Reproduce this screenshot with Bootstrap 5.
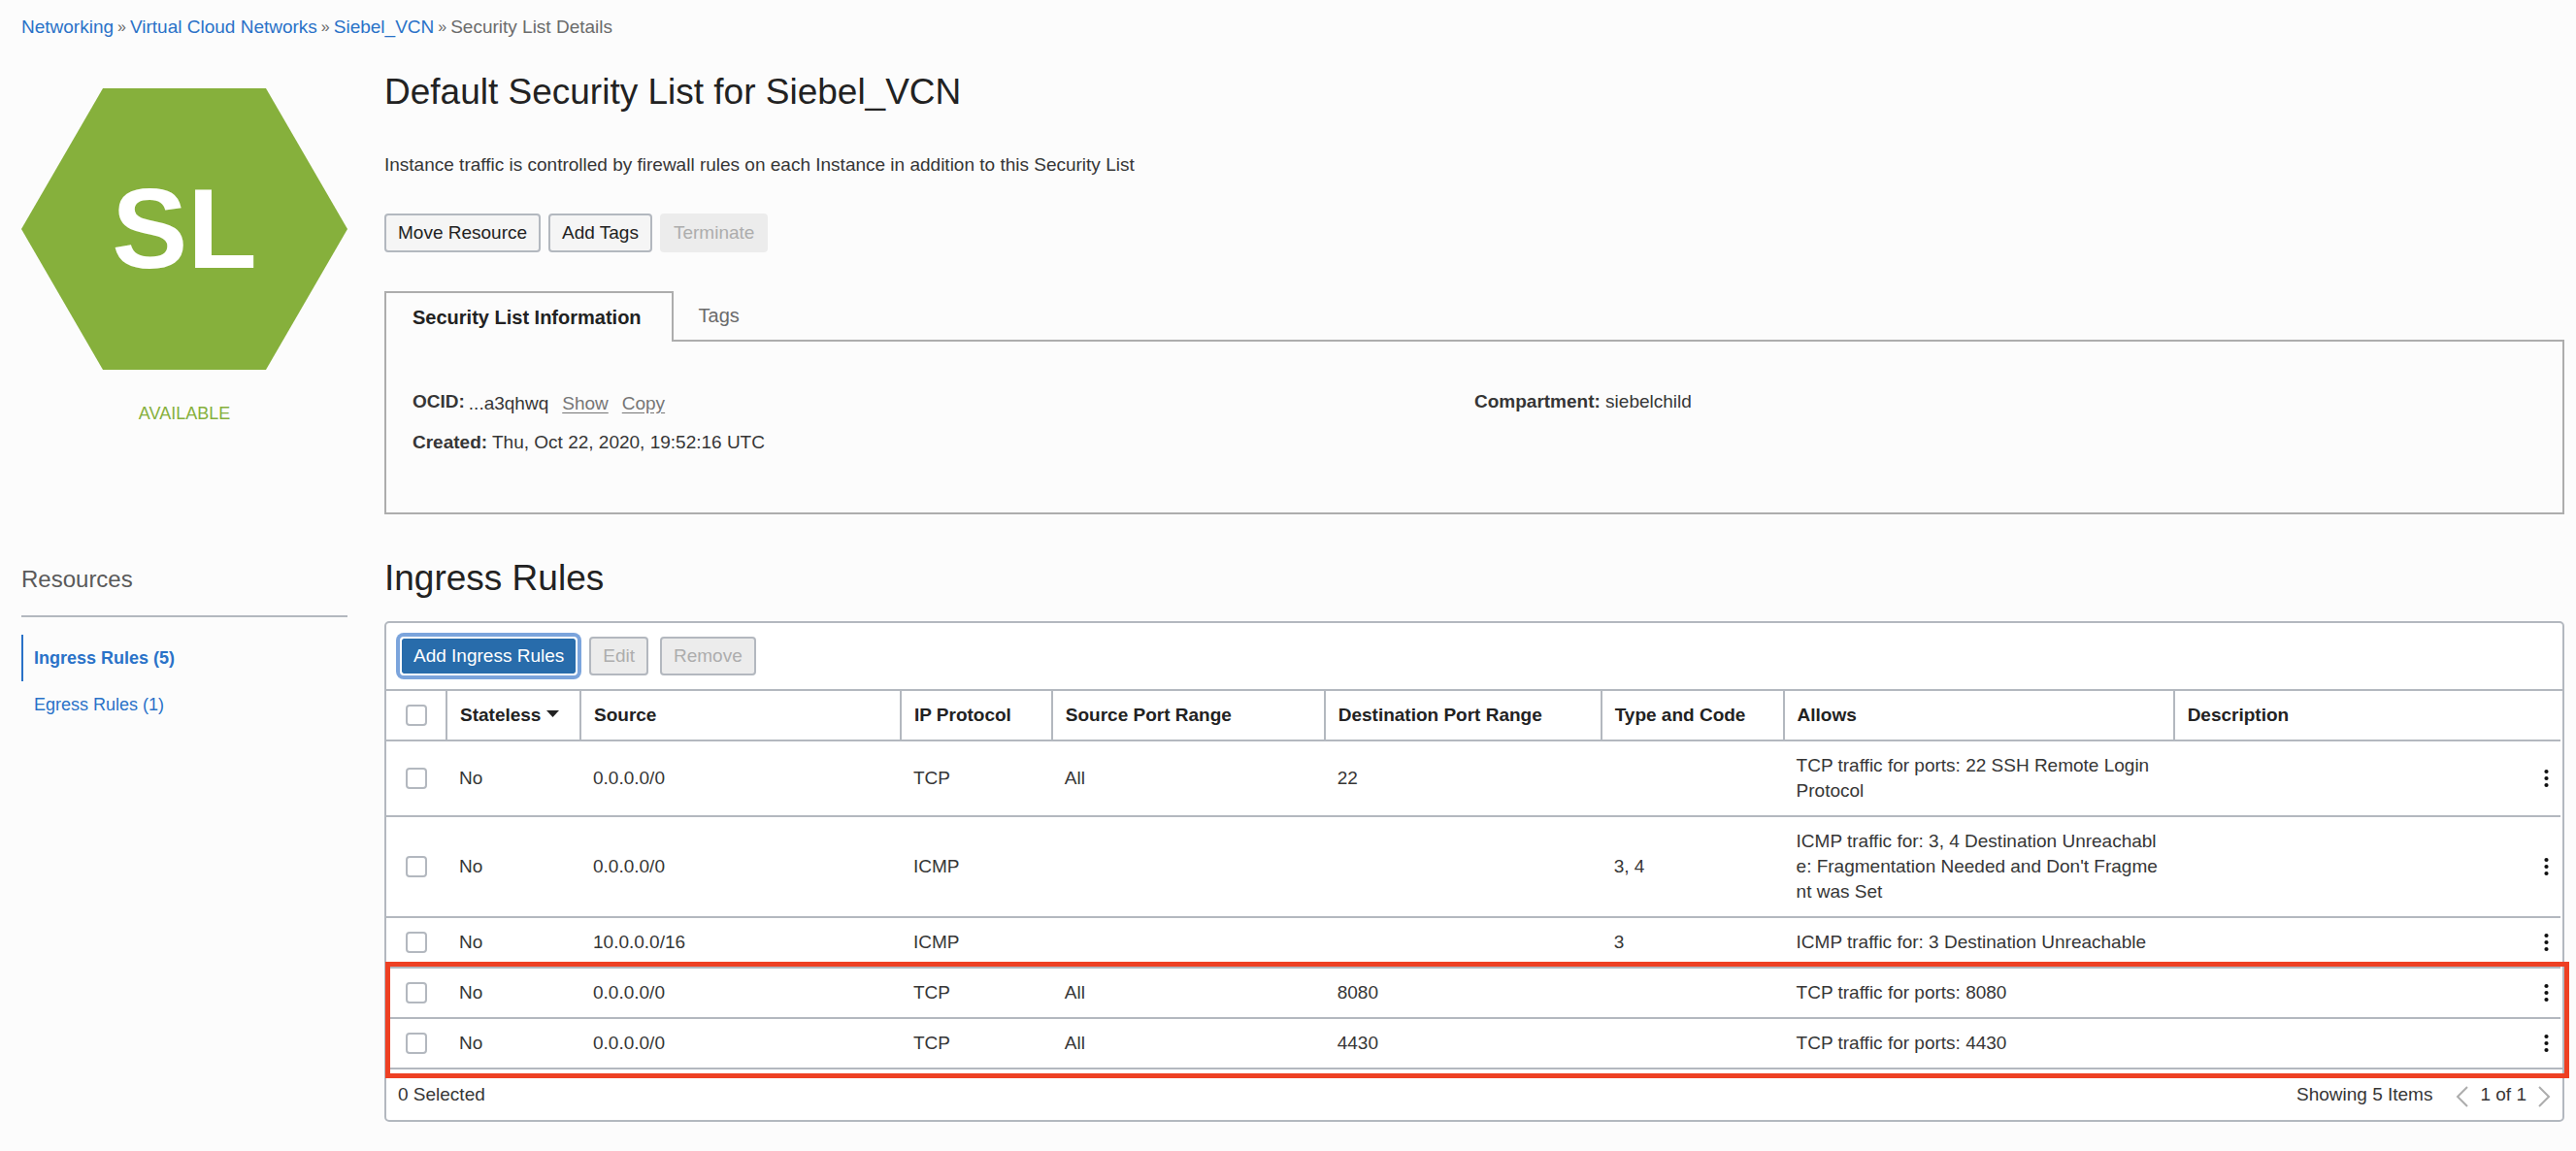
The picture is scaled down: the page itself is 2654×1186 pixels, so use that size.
<!DOCTYPE html>
<html lang="en">
<head>
<meta charset="utf-8">
<meta name="viewport" content="width=device-width, initial-scale=1">
<title>Default Security List for Siebel_VCN</title>
<link href="https://cdn.jsdelivr.net/npm/bootstrap@5.3.0/dist/css/bootstrap.min.css" rel="stylesheet">
<style>
  :root { --line: #b3b8bf; --panel: #adadad; --link: #2a72c8; --ink: #222; --text: #363636; --muted: #6b6b6b; --side: 336px; }
  body { background: #fcfcfc; color: var(--text); font: 19px/26px "Liberation Sans", Arial, sans-serif; }
  a { color: var(--link); text-decoration: none; }
  .page { padding: 15px 12px 24px 22px; }
  .crumbs { --bs-breadcrumb-divider: "»"; --bs-breadcrumb-item-padding-x: 4px; --bs-breadcrumb-divider-color: var(--muted); --bs-breadcrumb-item-active-color: var(--muted); --bs-breadcrumb-margin-bottom: 32px; --bs-breadcrumb-font-size: 19px; }
  .crumbs .breadcrumb-item + .breadcrumb-item::before { font-size: 16px; }
  .split { display: grid; grid-template-columns: var(--side) minmax(0, 1fr); column-gap: 38px; }
  .title { font-size: 37px; line-height: 44px; font-weight: 400; color: var(--ink); margin: 0; }
  .hexagon { height: 290px; margin-top: 18px; background: #86b03c; color: #fff; font-size: 117px; font-weight: 700; clip-path: polygon(25% 0, 75% 0, 100% 50%, 75% 100%, 25% 100%, 0 50%); }
  .state { color: #86b03c; margin-top: 32px; font-size: 18px; }
  .intro { margin: 40px 0 37px; }
  .btn { --bs-btn-font-size: 19px; --bs-btn-line-height: 26px; --bs-btn-padding-x: 12px; --bs-btn-padding-y: 5px; --bs-btn-border-width: 2px; --bs-btn-border-radius: 4px; --bs-btn-disabled-opacity: 1; line-height: 26px; }
  .btn-plain { --bs-btn-color: var(--ink); --bs-btn-bg: #f5f5f5; --bs-btn-border-color: var(--line); --bs-btn-disabled-color: #adadad; --bs-btn-disabled-bg: #ececec; --bs-btn-disabled-border-color: var(--line); }
  .btn-flat { --bs-btn-disabled-border-color: #ececec; }
  .btn-add { --bs-btn-color: #fff; --bs-btn-bg: #286cab; --bs-btn-border-color: #fff; margin-right: 12px; background-clip: padding-box; box-shadow: 0 0 0 4px #7ba4dc; }
  .info-tabs { margin-top: 40px; margin-bottom: -2px; }
  .info-tabs .nav-link { font-size: 20px; line-height: 26px; padding: 10px 24px 14px; border: 2px solid transparent; border-bottom: 0; border-radius: 0; color: var(--muted); }
  .info-tabs .nav-link.active { padding: 12px 31px 12px 27px; background: #fcfcfc; border-color: var(--panel); color: var(--ink); font-weight: 700; position: relative; }
  .info { border: 2px solid var(--panel); padding: 49px 27px 59px; }
  .ocid-value { padding-top: 3px; line-height: 23px; gap: 14px; margin-left: 4px; }
  .act { color: #767676; text-decoration: underline; text-underline-offset: 3px; }
  .rules { margin-top: 44px; }
  .side-title { font-size: 24px; line-height: 36px; font-weight: 400; color: #5a5a5a; margin: 0 0 18px; padding: 5px 0 19px; border-bottom: 2px solid var(--line); }
  .side-nav .nav-link { padding: 11px; border-left: 2px solid transparent; color: var(--link); font-size: 18px; }
  .side-nav .nav-link.active { font-weight: 700; border-color: var(--link); }
  .grid-box { border: 2px solid var(--line); border-radius: 5px; background: #fff; margin-top: 22px; }
  .tools { padding: 14px; border-bottom: 2px solid var(--line); }
  .rule-table { --bs-table-bg: transparent; table-layout: fixed; width: calc(100% - 2px); margin: 0; color: var(--text); vertical-align: middle; }
  .rule-table > thead { vertical-align: middle; }
  .rule-table > :not(caption) > * > * { padding: 12px; border: 0 solid var(--line); border-bottom-width: 2px; color: inherit; }
  .rule-table > thead > tr > th { color: var(--ink); }
  .rule-table > thead > tr > th + th { border-left-width: 2px; padding-left: 13px; padding-right: 0; }
  .rule-table > tbody > tr > td + td { padding-left: 13px; }
  .rule-table > tbody > tr > td + td:last-child { padding: 0 12px 0 0; }
  .rule-table > tbody > tr:last-child > td { border-bottom-width: 0; }
  .rule-table .form-check-input { display: block; width: 22px; height: 22px; margin: 0 auto; border: 2px solid var(--line); border-radius: 4px; }
  .c-check { width: 62px; } .c-state { width: 138px; } .c-source { width: 14.73%; } .c-proto { width: 6.96%; }
  .c-sport { width: 12.54%; } .c-dport { width: 12.72%; } .c-type { width: 8.39%; } .c-allow { width: 17.95%; }
  .more, .pager { border: 0; background: none; padding: 0; display: flex; }
  .more { margin-left: auto; }
  .foot { border-top: 2px solid var(--line); padding: 13px 12px; }
  .mark-box { position: absolute; left: -1px; right: -7px; bottom: 43px; height: 120px; border: 5px solid #ee4023; pointer-events: none; }
</style>
<script src="https://cdn.jsdelivr.net/npm/bootstrap@5.3.0/dist/js/bootstrap.bundle.min.js"></script>
</head>
<body>
<div class="page">
  <nav aria-label="breadcrumb">
    <ol class="breadcrumb crumbs">
      <li class="breadcrumb-item"><a href="#">Networking</a></li>
      <li class="breadcrumb-item"><a href="#">Virtual Cloud Networks</a></li>
      <li class="breadcrumb-item"><a href="#">Siebel_VCN</a></li>
      <li class="breadcrumb-item active" aria-current="page">Security List Details</li>
    </ol>
  </nav>

  <section class="split">
    <div class="text-center">
      <div class="hexagon d-flex align-items-center justify-content-center">SL</div>
      <div class="state">AVAILABLE</div>
    </div>
    <main>
      <h1 class="title">Default Security List for Siebel_VCN</h1>
      <p class="intro">Instance traffic is controlled by firewall rules on each Instance in addition to this Security List</p>
      <div class="d-flex gap-2">
        <button type="button" class="btn btn-plain">Move Resource</button>
        <button type="button" class="btn btn-plain">Add Tags</button>
        <button type="button" class="btn btn-plain btn-flat" disabled>Terminate</button>
      </div>
      <ul class="nav info-tabs">
        <li class="nav-item"><a class="nav-link active" href="#info">Security List Information</a></li>
        <li class="nav-item"><a class="nav-link" href="#tags">Tags</a></li>
      </ul>
      <div class="info" id="info">
        <div class="row g-0">
          <div class="col-6">
            <div class="d-flex mb-3"><strong>OCID:</strong>
              <span class="ocid-value d-flex"><span>...a3qhwq</span><a class="act" href="#">Show</a><a class="act" href="#">Copy</a></span></div>
            <div><strong>Created:</strong> Thu, Oct 22, 2020, 19:52:16 UTC</div>
          </div>
          <div class="col-6"><strong>Compartment:</strong> siebelchild</div>
        </div>
      </div>
    </main>
  </section>

  <section class="split rules">
    <aside>
      <h2 class="side-title">Resources</h2>
      <nav class="nav flex-column side-nav">
        <a class="nav-link active" href="#">Ingress Rules (5)</a>
        <a class="nav-link" href="#">Egress Rules (1)</a>
      </nav>
    </aside>
    <div>
      <h2 class="title">Ingress Rules</h2>
      <div class="grid-box position-relative">
        <div class="tools d-flex">
          <button type="button" class="btn btn-add">Add Ingress Rules</button>
          <button type="button" class="btn btn-plain me-2" disabled>Edit</button>
          <button type="button" class="btn btn-plain ms-1" disabled>Remove</button>
        </div>
        <table class="table rule-table">
          <colgroup><col class="c-check"><col class="c-state"><col class="c-source"><col class="c-proto"><col class="c-sport"><col class="c-dport"><col class="c-type"><col class="c-allow"><col></colgroup>
          <thead>
            <tr>
              <th scope="col"><input class="form-check-input" type="checkbox" aria-label="Select all rules"></th>
              <th scope="col" class="text-nowrap">Stateless <svg width="13" height="16" viewBox="0 0 13 16" aria-hidden="true"><path d="M0 2h13L6.500 9z" fill="#222"/></svg></th>
              <th scope="col">Source</th>
              <th scope="col">IP Protocol</th>
              <th scope="col">Source Port Range</th>
              <th scope="col">Destination Port Range</th>
              <th scope="col">Type and Code</th>
              <th scope="col">Allows</th>
              <th scope="col">Description</th>
            </tr>
          </thead>
          <tbody>
            <tr>
              <td><input class="form-check-input" type="checkbox" aria-label="Select rule 1"></td>
              <td>No</td><td>0.0.0.0/0</td><td>TCP</td><td>All</td><td>22</td><td></td>
              <td>TCP traffic for ports: 22 SSH Remote Login<br>Protocol</td>
              <td><button type="button" class="more" aria-label="Actions"><svg width="5" height="20" viewBox="0 0 5 20" fill="#111"><circle cx="2.5" cy="3" r="2.1"/><circle cx="2.5" cy="10" r="2.1"/><circle cx="2.5" cy="17" r="2.1"/></svg></button></td>
            </tr>
            <tr>
              <td><input class="form-check-input" type="checkbox" aria-label="Select rule 2"></td>
              <td>No</td><td>0.0.0.0/0</td><td>ICMP</td><td></td><td></td><td>3, 4</td>
              <td>ICMP traffic for: 3, 4 Destination Unreachabl<br>e: Fragmentation Needed and Don't Fragme<br>nt was Set</td>
              <td><button type="button" class="more" aria-label="Actions"><svg width="5" height="20" viewBox="0 0 5 20" fill="#111"><circle cx="2.5" cy="3" r="2.1"/><circle cx="2.5" cy="10" r="2.1"/><circle cx="2.5" cy="17" r="2.1"/></svg></button></td>
            </tr>
            <tr>
              <td><input class="form-check-input" type="checkbox" aria-label="Select rule 3"></td>
              <td>No</td><td>10.0.0.0/16</td><td>ICMP</td><td></td><td></td><td>3</td>
              <td>ICMP traffic for: 3 Destination Unreachable</td>
              <td><button type="button" class="more" aria-label="Actions"><svg width="5" height="20" viewBox="0 0 5 20" fill="#111"><circle cx="2.5" cy="3" r="2.1"/><circle cx="2.5" cy="10" r="2.1"/><circle cx="2.5" cy="17" r="2.1"/></svg></button></td>
            </tr>
            <tr>
              <td><input class="form-check-input" type="checkbox" aria-label="Select rule 4"></td>
              <td>No</td><td>0.0.0.0/0</td><td>TCP</td><td>All</td><td>8080</td><td></td>
              <td>TCP traffic for ports: 8080</td>
              <td><button type="button" class="more" aria-label="Actions"><svg width="5" height="20" viewBox="0 0 5 20" fill="#111"><circle cx="2.5" cy="3" r="2.1"/><circle cx="2.5" cy="10" r="2.1"/><circle cx="2.5" cy="17" r="2.1"/></svg></button></td>
            </tr>
            <tr>
              <td><input class="form-check-input" type="checkbox" aria-label="Select rule 5"></td>
              <td>No</td><td>0.0.0.0/0</td><td>TCP</td><td>All</td><td>4430</td><td></td>
              <td>TCP traffic for ports: 4430</td>
              <td><button type="button" class="more" aria-label="Actions"><svg width="5" height="20" viewBox="0 0 5 20" fill="#111"><circle cx="2.5" cy="3" r="2.1"/><circle cx="2.5" cy="10" r="2.1"/><circle cx="2.5" cy="17" r="2.1"/></svg></button></td>
            </tr>
          </tbody>
        </table>
        <div class="foot d-flex justify-content-between">
          <span>0 Selected</span>
          <div class="d-flex">
            <span class="me-4">Showing 5 Items</span>
            <button type="button" class="pager pt-1" aria-label="Previous page"><svg width="13" height="22" viewBox="0 0 13 22" fill="none" stroke="#adadad" stroke-width="2"><path d="M12 1L2 11l10 10"/></svg></button>
            <span class="px-2 mx-1">1 of 1</span>
            <button type="button" class="pager pt-1" aria-label="Next page"><svg width="13" height="22" viewBox="0 0 13 22" fill="none" stroke="#adadad" stroke-width="2"><path d="M1 1l10 10L1 21"/></svg></button>
          </div>
        </div>
        <div class="mark-box"></div>
      </div>
    </div>
  </section>
</div>
</body>
</html>
